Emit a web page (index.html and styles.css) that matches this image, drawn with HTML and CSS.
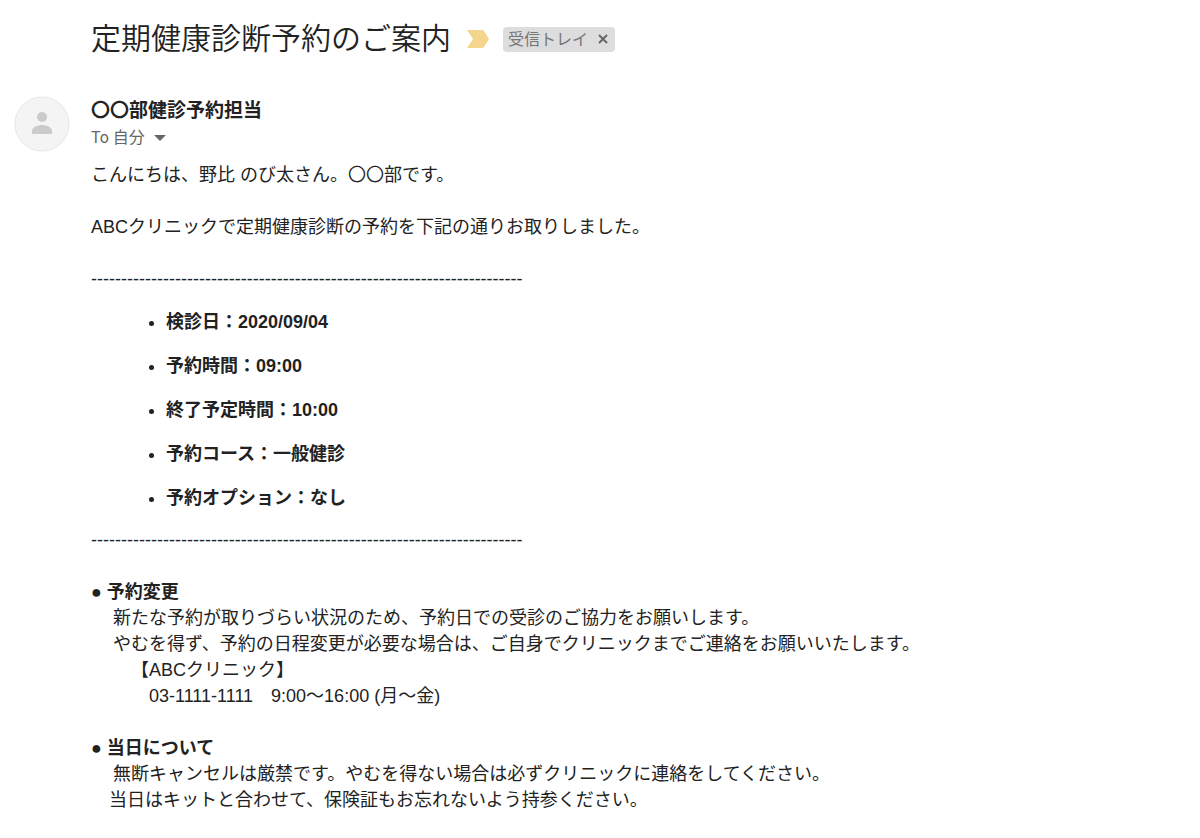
FILE: index.html
```html
<!DOCTYPE html>
<html lang="ja">
  <head>
    <meta charset="UTF-8" />
    <meta name="viewport" content="width=device-width, initial-scale=1.0" />
    <title>定期健康診断予約のご案内</title>
    <link rel="stylesheet" href="styles.css">
  </head>
  <body>
    <header class="subject">
      <h1>定期健康診断予約のご案内</h1>
      <svg class="important" width="22" height="18" viewBox="0 0 22 18" aria-hidden="true">
        <path d="M0 0h15q1 0 2 1l5 8-5 8q-1 1-2 1H0l6-9z" fill="#f4d58d" />
      </svg>
      <div class="chip">
        <span>受信トレイ</span>
        <button type="button" aria-label="ラベルを削除">
          <svg width="10" height="10" viewBox="0 0 10 10">
            <path d="M1 1l8 8M9 1L1 9" stroke="#666" stroke-width="2" />
          </svg>
        </button>
      </div>
    </header>

    <main class="mail">
      <div class="avatar">
        <svg width="56" height="56" viewBox="0 0 56 56" aria-hidden="true">
          <circle cx="28" cy="28" r="27" fill="#f4f4f4" stroke="#e6e6e6" />
          <circle cx="28" cy="21" r="5" fill="#cbcbcb" />
          <path d="M18 38v-3c0-4 6-6 10-6s10 2 10 6v3z" fill="#cbcbcb" />
        </svg>
      </div>

      <div class="content">
        <h2 class="sender">〇〇部健診予約担当</h2>
        <button type="button" class="recipient">
          To 自分
          <svg width="12" height="6" viewBox="0 0 12 6" aria-hidden="true">
            <path d="M0 0h12L6 6z" fill="#666" />
          </svg>
        </button>

        <div class="message">
          <p>こんにちは、野比 のび太さん。〇〇部です。</p>
          <p>ABCクリニックで定期健康診断の予約を下記の通りお取りしました。</p>
          <p class="rule">------------------------------------------------------------------------</p>

          <ul class="details">
            <li>検診日：2020/09/04</li>
            <li>予約時間：09:00</li>
            <li>終了予定時間：10:00</li>
            <li>予約コース：一般健診</li>
            <li>予約オプション：なし</li>
          </ul>

          <p class="rule">------------------------------------------------------------------------</p>

          <section>
            <h3>● 予約変更</h3>
            <p class="indent">新たな予約が取りづらい状況のため、予約日での受診のご協力をお願いします。</p>
            <p class="indent">やむを得ず、予約の日程変更が必要な場合は、ご自身でクリニックまでご連絡をお願いいたします。</p>
            <p class="clinic">【ABCクリニック】</p>
            <p class="phone">03-1111-1111　9:00〜16:00 (月〜金)</p>
          </section>

          <section>
            <h3>● 当日について</h3>
            <p class="indent">無断キャンセルは厳禁です。やむを得ない場合は必ずクリニックに連絡をしてください。</p>
            <p class="note">当日はキットと合わせて、保険証もお忘れないよう持参ください。</p>
          </section>
        </div>
      </div>
    </main>
  </body>
</html>
```

FILE: styles.css
```css
body {
  margin: 0;
  padding: 16px 14px 0;
  font-family: "Liberation Sans", "Noto Sans CJK JP", sans-serif;
  color: #222;
  background-color: #fff;
}

h1,
h2,
h3,
p,
ul {
  margin: 0;
  padding: 0;
}

button {
  padding: 0;
  border: none;
  background: none;
  font-family: inherit;
  cursor: pointer;
}

.subject {
  display: flex;
  align-items: center;
  padding-left: 77px;
}

.subject h1 {
  padding-bottom: 6px;
  font-family: "Noto Sans CJK JP", sans-serif;
  font-size: 30px;
  font-weight: 350;
  line-height: 40px;
}

.important {
  margin: 0 14px 0 16px;
}

.chip {
  display: flex;
  align-items: center;
  gap: 10px;
  padding: 0 7px 0 5px;
  border-radius: 4px;
  background-color: #ddd;
  color: #777;
  font-size: 16px;
  line-height: 25px;
}

.chip button {
  display: flex;
}

.mail {
  display: flex;
  gap: 21px;
  padding-top: 34px;
}

.content {
  flex: 1;
  padding-top: 1px;
}

.sender {
  font-size: 19px;
  line-height: 28px;
}

.recipient {
  display: flex;
  align-items: center;
  gap: 9px;
  color: #666;
  font-family: Roboto, "Noto Sans CJK JP", sans-serif;
  font-size: 16px;
  line-height: 26px;
}

.message {
  margin-top: 11px;
  font-size: 18px;
  line-height: 26px;
}

.message > p + p,
.message section {
  margin-top: 26px;
}

.message h3 {
  font-size: 18px;
}

.details {
  display: flex;
  flex-direction: column;
  gap: 18px;
  margin: 17px 0 16px;
  padding-left: 75px;
  font-weight: bold;
}

.indent {
  padding-left: 22px;
}

.clinic {
  padding-left: 40px;
}

.phone {
  padding-left: 58px;
}

.note {
  padding-left: 18px;
}
```
